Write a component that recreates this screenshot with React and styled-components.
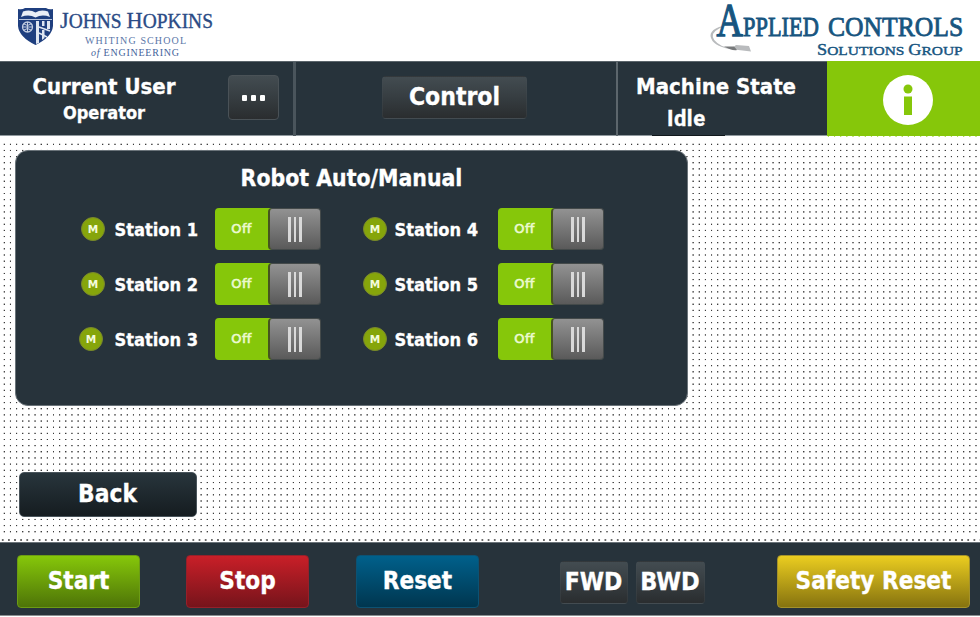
import React from 'react';
import styled, { createGlobalStyle } from 'styled-components';

const Global = createGlobalStyle`
  * { box-sizing: border-box; }
  body { margin: 0; background: #fff; overflow: hidden; }
`;

const Screen = styled.div`
  width: 980px;
  height: 617px;
  display: flex;
  flex-direction: column;
  background: #fff;
  color: #fff;
  font-family: 'DejaVu Sans Condensed', 'DejaVu Sans', sans-serif;
  font-stretch: condensed;
  font-weight: 700;
  white-space: nowrap;
  -webkit-text-stroke: 0.3px currentColor;
`;

const LogoBar = styled.header`
  height: 61px;
  display: flex;
  justify-content: space-between;
  -webkit-text-stroke: 0;
  svg { display: block; overflow: visible; }
`;

const StatusBar = styled.nav`
  height: 75px;
  display: grid;
  grid-template-columns: 293px 3px 320px 2px 209px 1fr;
  background: #27333b;
  border-top: 1px solid #5b656b;
  border-bottom: 1px solid #919a9f;
`;

const Divider = styled.div`
  background: ${(p) => p.$color};
`;

const UserCell = styled.div`
  display: flex;
  padding: 13px 0 0 31px;
`;

const TitledValue = styled.div`
  width: 146px;
  display: flex;
  flex-direction: column;
  align-items: center;
`;

const CellTitle = styled.div`
  font-size: 22px;
  line-height: 24px;
`;

const UserName = styled.div`
  font-size: 18px;
  line-height: 28px;
`;

const FlatButton = styled.button`
  width: ${(p) => p.$w}px;
  height: ${(p) => p.$h}px;
  flex: none;
  display: flex;
  align-items: center;
  justify-content: center;
  padding: 0 0 2px;
  border: 1px solid ${(p) => p.$edge || 'rgba(70, 78, 83, 0.35)'};
  border-radius: 4px;
  background: linear-gradient(#434c51, #363d41 50%, #2a2d2f);
  color: #fff;
  font: inherit;
  font-size: ${(p) => p.$size || 24.5}px;
`;

const MoreButton = styled(FlatButton)`
  gap: 3.6px;
  margin-left: 51px;
`;

const MoreDot = styled.i`
  width: 5.3px;
  height: 5.3px;
  margin-top: 3px;
  border-radius: 1px;
  background: #fff;
`;

const ModeCell = styled.div`
  padding: 14px 0 0 86px;
`;

const StateCell = styled.div`
  padding: 13px 0 0 18px;
`;

const StateValue = styled.div`
  width: 73px;
  height: 37px;
  margin: 0 0 0 16px;
  padding-left: 15px;
  border-bottom: 1px solid #11181c;
  font-family: Roboto, sans-serif;
  font-stretch: normal;
  font-size: 22px;
  line-height: 40px;
  letter-spacing: 0.5px;
`;

const InfoCell = styled.div`
  margin-bottom: -1px;
  margin-top: -1px;
  padding: 14px 0 0 55px;
  background: #86c70a;
  border-bottom: 1px solid #b4dc62;
  svg { display: block; }
`;

/* White sheet with an evenly pitched grid of small dots and one denser row at its foot. */
const Workspace = styled.main`
  height: 406px;
  padding: 14px 0 0 15px;
  background:
    repeating-linear-gradient(90deg, #fff 0 3.3px, transparent 4px 4.6px, #fff 5.3px 6.15px) 0 0 / 100% 399px no-repeat,
    repeating-linear-gradient(180deg, #fff 0 1.3px, #3c3c3c 2px 2.6px, #fff 3.3px 6.15px) 0 6.2px / 100% 393px no-repeat,
    repeating-linear-gradient(90deg, #fff 0 1.4px, #6c6c6c 2.2px 3.2px, #fff 4px 6.15px) 0 403px / 100% 2px no-repeat;
`;

const Panel = styled.section`
  width: 673px;
  height: 256px;
  border: 1px solid #6b747a;
  border-radius: 13px;
  background: #27333b;
`;

const PanelTitle = styled.h2`
  margin: 0;
  padding: 13px 0 0;
  font-size: 22.8px;
  line-height: 28px;
  text-align: center;
`;

const Stations = styled.div`
  display: grid;
  grid-template-columns: 282px 300px;
  grid-auto-rows: 55px;
  margin: 16px 0 0 65px;
`;

const Station = styled.div`
  display: flex;
  align-items: flex-start;
`;

const Badge = styled.span`
  width: 24px;
  height: 24px;
  margin: 9px ${(p) => p.$gap + p.$shift}px 0 ${(p) => -p.$shift}px;
  border: 1px solid #79882c;
  border-radius: 50%;
  background: #86a50b;
  color: #f4fbdc;
  font-family: 'DejaVu Sans', sans-serif;
  font-stretch: normal;
  font-size: 10.5px;
  line-height: 22px;
  text-align: center;
  -webkit-text-stroke: 0;
`;

const StationName = styled.span`
  width: ${(p) => p.$w}px;
  font-size: 18.1px;
  line-height: 43px;
`;

const Switch = styled.button`
  width: 106px;
  height: 42px;
  display: flex;
  padding: 0;
  border: 0;
  border-radius: 4px;
  background: linear-gradient(90deg, #86c70a 54%, #3c4244 54%);
  color: #ecfad0;
  font: inherit;
`;

const SwitchText = styled.span`
  width: 53px;
  font-family: 'DejaVu Sans', sans-serif;
  font-stretch: normal;
  font-size: 13px;
  font-weight: 400;
  line-height: 41px;
  letter-spacing: 0.3px;
  text-align: center;
  -webkit-text-stroke: 0.6px #ecfad0;
`;

const Knob = styled.span`
  width: 53px;
  height: 42px;
  display: flex;
  justify-content: center;
  align-items: center;
  gap: 3px;
  border: 1px solid #444a4a;
  border-left: 2px solid #46541f;
  border-radius: 4px;
  background: linear-gradient(#929292, #5a5a5a);
`;

const Grip = styled.i`
  width: 2.4px;
  height: 25px;
  background: #d9d9d9;
`;

const BackButton = styled.button`
  width: 178px;
  height: 45px;
  display: block;
  margin: 66px 0 0 4px;
  padding: 0 1px 2px 0;
  border: 1px solid #4a555c;
  border-radius: 5px;
  background: linear-gradient(#28353c, #151c20);
  color: #fff;
  font: inherit;
  font-size: 24.3px;
`;

const Footer = styled.footer`
  height: 74px;
  display: flex;
  align-items: flex-start;
  padding: 11.5px 0 0 17px;
  border-top: 1px solid #6b747a;
  border-bottom: 1px solid #8b8f91;
  background: #27333b;
`;

const ActionButton = styled.button`
  width: ${(p) => p.$w || 123}px;
  height: 53px;
  margin-right: ${(p) => p.$after}px;
  padding: 0 0 1px;
  border: 1px solid ${(p) => p.$edge};
  border-radius: 4px;
  background: linear-gradient(${(p) => p.$from}, ${(p) => p.$to});
  color: #fff;
  font: inherit;
  font-size: 24.1px;
`;

const JogPair = styled.div`
  display: flex;
  gap: 8px;
  margin: 6.5px 72.5px 0 -0.5px;
`;

function HopkinsLogo() {
  return (
    <svg width="240" height="61" viewBox="0 0 240 61">
      <path d="M18 9Q22 10 25 8H46Q49 10 53 9V26Q52 37 35.5 45Q19 37 18 26Z" fill="#1f3f7f" />
      <path d="M23 11.500Q30 9 35.500 12.500Q41 9 48 11.500L50 17Q42 14 35.500 17.500Q29 14 21 17Z" fill="#e9eef6" />
      <path d="M19 19.500H52" stroke="#b9c6dd" strokeWidth="1" />
      <circle cx="27.500" cy="27" r="5" fill="none" stroke="#c3cee2" strokeWidth="1.300" />
      <path d="M22.500 27H32.500M27.500 22V32M24 24Q27.500 27 31 24M24 30Q27.500 27 31 30" fill="none" stroke="#c3cee2" strokeWidth="1" />
      <path d="M36 21H39V43L36 44ZM42 21H44.500V26H42ZM47 21H50V29H47ZM42 30H44.500V38L42 40Z" fill="#dfe6f1" />
      <path d="M39 27L50 31M39 33L47 37" stroke="#dfe6f1" strokeWidth="1.500" />
      <g fill="#2b4b85" fontFamily="'Liberation Serif', serif" fontWeight="400">
        <text transform="translate(60 28.300) scale(.95 1)" fontSize="20.500" stroke="#2b4b85" strokeWidth=".35">
          <tspan fontSize="23.500">J</tspan>OHNS <tspan fontSize="23.500">H</tspan>OPKINS
        </text>
        <text x="85" y="44.300" fontSize="10" textLength="101" fill="#5a76a8">WHITING SCHOOL</text>
        <text x="91" y="56" fontSize="10" textLength="88" fill="#45639b">
          <tspan fontStyle="italic">of</tspan> ENGINEERING
        </text>
      </g>
    </svg>
  );
}

function AppliedControlsLogo() {
  return (
    <svg width="280" height="61" viewBox="0 0 280 61">
      <path d="M33 24Q10 27 10.500 36Q12 46 30 49L51 51.500L49 46L36 45Q32 50 22 46Q11 40 13 34Q17 27 33 24Z" fill="#b9bbbd" />
      <path d="M24 46.500Q32 51 37 50L34 46.500Z" fill="#77797b" />
      <g fill="#17557f" stroke="#17557f" fontFamily="'Liberation Serif', serif" fontWeight="400">
        <text transform="translate(16.500 36) scale(.78 1)" fontSize="47" strokeWidth="1.3">A</text>
        <text transform="translate(43 36) scale(.8 1)" fontSize="28" strokeWidth=".9">PPLIED</text>
        <text transform="translate(128 36) scale(.915 1)" fontSize="28" strokeWidth=".8">CONTROLS</text>
        <text transform="translate(117 55) scale(1.145 1)" fontSize="13.500" strokeWidth=".4">
          <tspan fontSize="16">S</tspan>OLUTIONS <tspan fontSize="16">G</tspan>ROUP
        </text>
      </g>
    </svg>
  );
}

const stations = [
  { name: 'Station 1', gap: 9.5, width: 100.5 },
  { name: 'Station 4', gap: 7.5, width: 103.5 },
  { name: 'Station 2', gap: 9.5, width: 100.5 },
  { name: 'Station 5', gap: 7.5, width: 103.5 },
  { name: 'Station 3', gap: 9.5, width: 100.5, shift: 2 },
  { name: 'Station 6', gap: 7.5, width: 103.5 },
];

export default function App() {
  return (
    <>
      <Global />
      <Screen>
        <LogoBar>
          <HopkinsLogo />
          <AppliedControlsLogo />
        </LogoBar>
        <StatusBar>
          <UserCell>
            <TitledValue>
              <CellTitle>Current User</CellTitle>
              <UserName>Operator</UserName>
            </TitledValue>
            <MoreButton $w={51} $h={45} $edge="#4a5257">
              <MoreDot />
              <MoreDot />
              <MoreDot />
            </MoreButton>
          </UserCell>
          <Divider $color="#4a555c" />
          <ModeCell>
            <FlatButton $w={145} $h={43}>Control</FlatButton>
          </ModeCell>
          <Divider $color="#5c666c" />
          <StateCell>
            <CellTitle>Machine State</CellTitle>
            <StateValue>Idle</StateValue>
          </StateCell>
          <InfoCell>
            <svg width="52" height="52" viewBox="0 0 52 52">
              <circle cx="26" cy="25" r="25" fill="#fff" />
              <circle cx="26" cy="14" r="4.500" fill="#86c70a" />
              <rect x="22" y="21.500" width="8" height="18.500" fill="#86c70a" />
            </svg>
          </InfoCell>
        </StatusBar>
        <Workspace>
          <Panel>
            <PanelTitle>Robot Auto/Manual</PanelTitle>
            <Stations>
              {stations.map(({ name, gap, width, shift = 0 }) => (
                <Station key={name}>
                  <Badge $gap={gap} $shift={shift}>M</Badge>
                  <StationName $w={width}>{name}</StationName>
                  <Switch>
                    <SwitchText>Off</SwitchText>
                    <Knob>
                      <Grip />
                      <Grip />
                      <Grip />
                    </Knob>
                  </Switch>
                </Station>
              ))}
            </Stations>
          </Panel>
          <BackButton>Back</BackButton>
        </Workspace>
        <Footer>
          <ActionButton $after={46} $edge="#6c9c14" $from="#86c70a" $to="#4e7408">Start</ActionButton>
          <ActionButton $after={47} $edge="#96202a" $from="#c91f28" $to="#76141b">Stop</ActionButton>
          <ActionButton $after={81} $edge="#0c5273" $from="#00608b" $to="#00364f">Reset</ActionButton>
          <JogPair>
            <FlatButton $w={68} $h={43}>FWD</FlatButton>
            <FlatButton $w={69} $h={43} $size={25}>BWD</FlatButton>
          </JogPair>
          <ActionButton $w={193} $after={0} $edge="#a4922a" $from="#ebcd20" $to="#86730f">Safety Reset</ActionButton>
        </Footer>
      </Screen>
    </>
  );
}
